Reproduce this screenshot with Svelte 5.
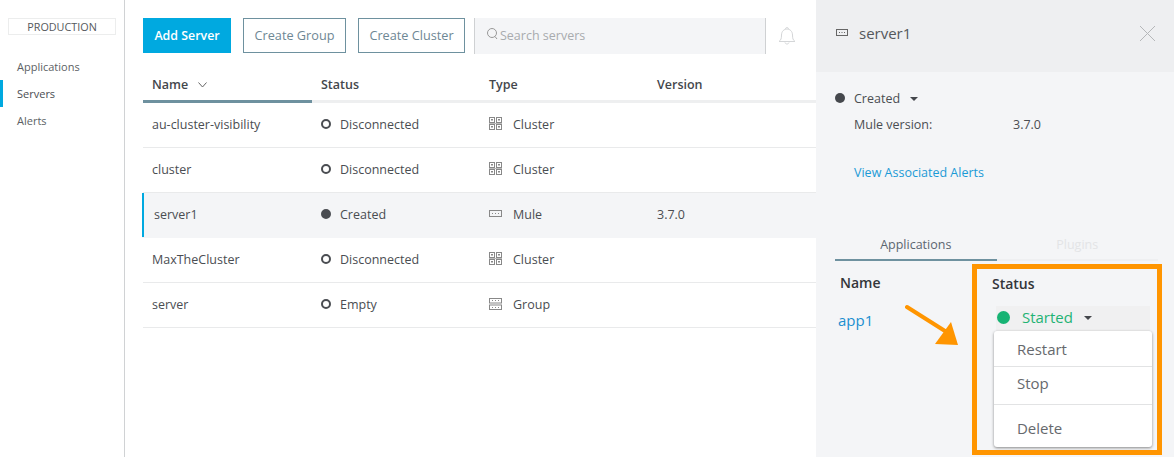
<script lang="ts">
  type Row = { name: string; status: string; type: string; version: string; filled?: boolean; selected?: boolean };

  const navItems = ["Applications", "Servers", "Alerts"];
  const rows: Row[] = [
    { name: "au-cluster-visibility", status: "Disconnected", type: "Cluster", version: "" },
    { name: "cluster", status: "Disconnected", type: "Cluster", version: "" },
    { name: "server1", status: "Created", type: "Mule", version: "3.7.0", filled: true, selected: true },
    { name: "MaxTheCluster", status: "Disconnected", type: "Cluster", version: "" },
    { name: "server", status: "Empty", type: "Group", version: "" },
  ];
</script>

{#snippet typeIcon(type: string)}
  <svg class="type-icon" width="14" height="14" viewBox="0 0 14 14" fill="none" stroke="#888" stroke-width="1">
    {#if type === "Cluster"}
      <rect x="0.500" y="0.500" width="5" height="5" />
      <rect x="7.500" y="0.500" width="5" height="5" />
      <rect x="0.500" y="7.500" width="5" height="5" />
      <rect x="7.500" y="7.500" width="5" height="5" />
      <path d="M2 3h2M2 2.500h2M9 3h2M9 2.500h2M2 10h2M2 9.500h2M9 10h2M9 9.500h2" />
      <path d="M0 6.500h13" stroke="#bbb" />
    {:else if type === "Mule"}
      <rect x="0.500" y="3.500" width="12" height="6" />
      <path d="M3 6.500h1M6 6.500h1M9 6.500h1" />
    {:else}
      <rect x="0.500" y="1.500" width="12" height="4.500" />
      <rect x="0.500" y="8" width="12" height="4.500" />
      <path d="M3 3.500h1M6 3.500h1M9 3.500h1M3 10.500h1M6 10.500h1M9 10.500h1" />
    {/if}
  </svg>
{/snippet}

<div class="page">
  <aside class="sidebar">
    <div class="env">PRODUCTION</div>
    <nav class="nav">
      {#each navItems as item}
        <div class="nav-item" class:active={item === "Servers"}>{item}</div>
      {/each}
    </nav>
  </aside>

  <main class="main">
    <div class="toolbar">
      <button class="btn primary">Add Server</button>
      <button class="btn group">Create Group</button>
      <button class="btn cluster">Create Cluster</button>
      <div class="search">
        <svg width="13" height="14" viewBox="0 0 13 14" fill="none" stroke="#999" stroke-width="1">
          <circle cx="6" cy="6" r="4.500" />
          <path d="M9 9.500l2 2.500" />
        </svg>
        <span>Search servers</span>
      </div>
      <svg class="bell" width="18" height="20" viewBox="0 0 18 20" fill="none" stroke="#d4d6d8" stroke-width="1">
        <path d="M1 15.500c2-1.500 2.500-3 2.500-6.500 0-3.500 2.500-6 5.500-6s5.500 2.500 5.500 6c0 3.500.5 5 2.500 6.500z" />
        <path d="M7.500 3c0-2 3-2 3 0M7 16.500c.5 2 3.500 2 4 0" />
      </svg>
    </div>

    <div class="table">
      <div class="row head">
        <div class="cell name sorted"><span>Name</span>
          <svg class="sort" width="9" height="6" viewBox="0 0 9 6" fill="none" stroke="#666"><path d="M.5.5l4 4.500 4-4.500" /></svg>
        </div>
        <div class="cell status">Status</div>
        <div class="cell type">Type</div>
        <div class="cell">Version</div>
      </div>
      {#each rows as row}
        <div class="row" class:selected={row.selected}>
          <div class="cell name">{row.name}</div>
          <div class="cell status">
            <span class="dot" class:filled={row.filled}></span>{row.status}
          </div>
          <div class="cell type">{@render typeIcon(row.type)}{row.type}</div>
          <div class="cell">{row.version}</div>
        </div>
      {/each}
    </div>
  </main>

  <section class="panel">
    <header class="panel-head">
      <svg width="14" height="14" viewBox="0 0 14 14" fill="none" stroke="#666" stroke-width="1">
        <rect x="1.500" y="3.500" width="11" height="6" />
        <path d="M4 6.500h1M6.500 6.500h1M9 6.500h1" />
      </svg>
      <span class="panel-title">server1</span>
      <svg class="close" width="17" height="17" viewBox="0 0 17 17" stroke="#b5b7b9" stroke-width="1"><path d="M1 1l15 15M16 1L1 16" /></svg>
    </header>

    <div class="panel-body">
      <div class="state">
        <span class="state-dot"></span>Created<span class="caret"></span>
      </div>
      <div class="meta"><span class="meta-key">Mule version:</span><span>3.7.0</span></div>
      <div class="alerts">View Associated Alerts</div>

      <div class="tabs">
        <div class="tab on">Applications</div>
        <div class="tab">Plugins</div>
      </div>

      <div class="apps">
        <div class="apps-name">
          <div class="apps-head">Name</div>
          <div class="app-link">app1</div>
        </div>
        <div class="apps-status">
          <div class="apps-head">Status</div>
          <div class="started">
            <span class="started-dot"></span>Started<span class="caret"></span>
          </div>
          <div class="menu">
            <div class="menu-item">Restart</div>
            <div class="menu-item stop">Stop</div>
            <div class="menu-item delete">Delete</div>
          </div>
        </div>
      </div>
    </div>

    <!-- annotation drawn on top of the screenshot -->
    <div class="highlight"></div>
    <svg class="arrow" width="56" height="44" viewBox="0 0 56 44">
      <path d="M2 3L40 27" stroke="#ff9500" stroke-width="4" stroke-linecap="round" />
      <path d="M46 18L53 41L30 40z" fill="#ff9500" />
    </svg>
  </section>
</div>

<style>
  :global(body) {
    margin: 0;
    background: #fff;
  }

  .page {
    display: flex;
    width: 1174px;
    height: 457px;
    overflow: hidden;
    font-family: "Open Sans", sans-serif;
    font-size: 12.500px;
    color: #4a4d52;
  }

  .sidebar {
    width: 124px;
    flex-shrink: 0;
    border-right: 1px solid #d0d2d4;
    padding-top: 18px;
  }

  .env {
    width: 106px;
    height: 15px;
    margin-left: 8px;
    border: 1px solid #eceded;
    font-size: 10.800px;
    line-height: 15px;
    text-align: center;
    color: #55585c;
  }

  .nav {
    margin-top: 18px;
  }

  .nav-item {
    height: 27px;
    padding-left: 17px;
    font-size: 11px;
    line-height: 27px;
    color: #5c5f64;
  }

  .nav-item.active {
    padding-left: 14px;
    border-left: 3px solid #00a9e0;
    color: #4a4d52;
  }

  .main {
    width: 691px;
    flex-shrink: 0;
    padding: 18px 0 0 18px;
    box-sizing: border-box;
  }

  .toolbar {
    display: flex;
    align-items: flex-start;
    height: 36px;
  }

  .btn {
    height: 35px;
    padding: 0 0 1px;
    background: #fff;
    border: 1px solid #6e919f;
    font-family: inherit;
    font-size: 12.700px;
    color: #6e8794;
  }

  .btn.primary {
    width: 88px;
    margin-right: 12px;
    background: #00a9e0;
    border-color: #00a9e0;
    color: #fff;
    font-size: 12.400px;
    font-weight: 600;
  }

  .btn.group {
    width: 103px;
    margin-right: 12px;
  }

  .btn.cluster {
    width: 107px;
    margin-right: 9px;
  }

  .search {
    display: flex;
    align-items: center;
    gap: 1px;
    width: 292px;
    height: 36px;
    box-sizing: border-box;
    padding: 0 0 2px 11px;
    background: #f4f5f7;
    border-left: 1px solid #cfd1d3;
    border-right: 1px solid #cfd1d3;
    color: #a8abae;
  }

  .search svg {
    margin-top: -3px;
  }

  .bell {
    margin: 8px 0 0 12px;
  }

  .table {
    margin-top: 13px;
  }

  .row {
    display: grid;
    grid-template-columns: 169px 168px 168px 1fr;
    height: 45px;
    box-sizing: border-box;
    border-bottom: 1px solid #e9eaeb;
  }

  .row.head {
    height: 36px;
    border-bottom: 3px solid #eeeff0;
    font-weight: 600;
    color: #44474c;
  }

  .cell {
    display: flex;
    align-items: center;
    padding-left: 9px;
    padding-bottom: 2px;
    white-space: nowrap;
  }

  .head .cell {
    padding-bottom: 2px;
  }

  .head .sorted {
    height: 36px;
    box-sizing: border-box;
    border-bottom: 3px solid #6e919f;
    padding-top: 1px;
    padding-bottom: 0;
  }

  .sort {
    margin-left: 10px;
    margin-top: 2px;
  }

  .row.selected {
    grid-template-columns: 170px 168px 168px 1fr;
    margin-left: -1px;
    background: #f4f5f7;
    box-shadow: inset 2px 0 0 #00a9e0;
    border-bottom-color: #f4f5f7;
  }

  .selected .name {
    padding-left: 12px;
  }

  .dot {
    width: 10px;
    height: 10px;
    box-sizing: border-box;
    margin-right: 9px;
    border: 2px solid #4a4d52;
    border-radius: 50%;
  }

  .dot.filled {
    background: #4a4d52;
  }

  .type-icon {
    margin-right: 10px;
  }

  .panel {
    position: relative;
    width: 358px;
    flex-shrink: 0;
    background: #f4f5f7;
  }

  .panel-head {
    display: flex;
    align-items: center;
    height: 72px;
    box-sizing: border-box;
    padding: 0 18px 6px 19px;
    background: #eeeff1;
  }

  .panel-title {
    margin-left: 10px;
    font-size: 15px;
    color: #55585c;
  }

  .close {
    margin-left: auto;
    margin-top: 1px;
  }

  .panel-body {
    padding: 16px 16px 0 19px;
  }

  .state {
    display: flex;
    align-items: center;
    height: 20px;
  }

  .state-dot {
    width: 10px;
    height: 10px;
    margin-right: 9px;
    border-radius: 50%;
    background: #45484d;
  }

  .caret {
    width: 0;
    height: 0;
    margin-left: 10px;
    margin-top: 1px;
    border-left: 4px solid transparent;
    border-right: 4px solid transparent;
    border-top: 4px solid #44474c;
  }

  .meta {
    display: flex;
    height: 20px;
    margin-top: 7px;
    padding-left: 19px;
    line-height: 20px;
  }

  .meta-key {
    width: 159px;
  }

  .alerts {
    margin-top: 28px;
    padding-left: 19px;
    line-height: 20px;
    color: #1b9ad6;
  }

  .tabs {
    display: flex;
    margin-top: 51px;
  }

  .tab {
    width: 162px;
    height: 25px;
    border-bottom: 2px solid #eeeff1;
    line-height: 21px;
    text-align: center;
    font-size: 12.500px;
    color: #e3e4e6;
  }

  .tab.on {
    border-bottom-color: #6e919f;
    color: #5c6670;
  }

  .apps {
    display: flex;
    padding-top: 11px;
  }

  .apps-name {
    width: 157px;
    padding-left: 5px;
  }

  .apps-head {
    font-size: 14px;
    font-weight: 600;
    line-height: 22px;
    color: #33363a;
  }

  .app-link {
    margin-top: 16px;
    margin-left: -2px;
    font-size: 15px;
    line-height: 20px;
    color: #1b8fd0;
  }

  .apps-status {
    width: 175px;
    margin-top: 1px;
    padding-left: 3px;
    font-size: 14px;
  }

  .started {
    display: flex;
    align-items: center;
    width: 154px;
    height: 25px;
    margin: 11px 0 0 4px;
    padding: 0 0 3px 1px;
    box-sizing: border-box;
    background: #f0f0f1;
    font-size: 15px;
    color: #1fb374;
  }

  .started-dot {
    width: 13px;
    height: 13px;
    margin-right: 12px;
    border-radius: 50%;
    background: #17b374;
  }

  .started .caret {
    margin-left: 11px;
  }

  .menu {
    width: 158px;
    height: 116px;
    margin: 0 0 0 2px;
    background: #fff;
    border-radius: 3px;
    box-shadow: 0 1px 3px rgba(0, 0, 0, 0.45);
    font-size: 15px;
    color: #66696d;
  }

  .menu-item {
    box-sizing: border-box;
    height: 36px;
    padding-left: 23px;
    line-height: 37px;
    border-bottom: 1px solid #e2e3e4;
  }

  .menu-item.stop {
    height: 38px;
    line-height: 33px;
  }

  .menu-item.delete {
    height: 42px;
    line-height: 46px;
    border-bottom: none;
  }

  .highlight {
    position: absolute;
    left: 156px;
    top: 264px;
    width: 190px;
    height: 191px;
    box-sizing: border-box;
    border: 5px solid #ff9500;
  }

  .arrow {
    position: absolute;
    left: 89px;
    top: 304px;
  }
</style>
